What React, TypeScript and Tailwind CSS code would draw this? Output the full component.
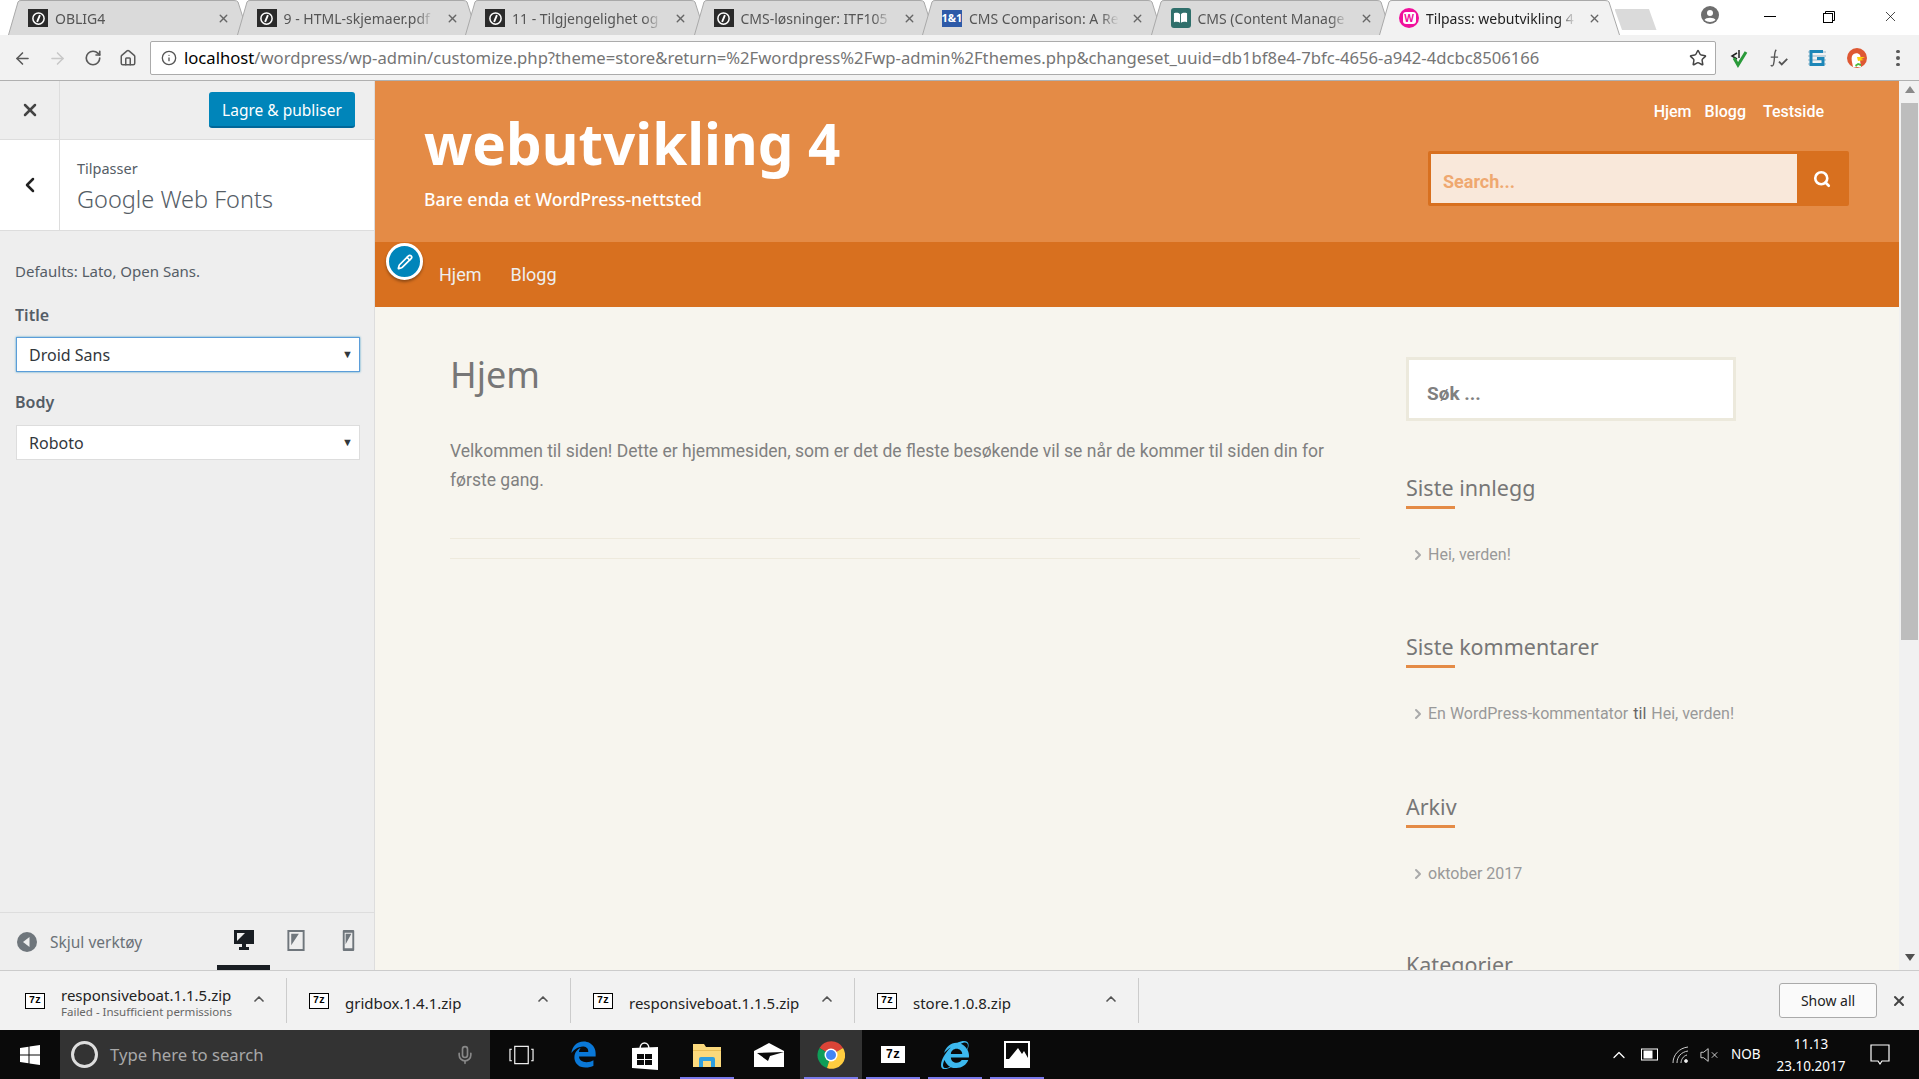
import { ArrowLeft, ArrowRight, ChevronLeft, ChevronRight, ChevronUp, Home, Info, Mic, Pencil, RotateCw, Search, Star, X } from "lucide-react";
import { FaEdgeLegacy, FaInternetExplorer } from "react-icons/fa";

const tabs = [
  { title: "OBLIG4", icon: "wp" },
  { title: "9 - HTML-skjemaer.pdf", icon: "wp" },
  { title: "11 - Tilgjengelighet og", icon: "wp" },
  { title: "CMS-løsninger: ITF105", icon: "wp" },
  { title: "CMS Comparison: A Re", icon: "one" },
  { title: "CMS (Content Manage", icon: "book" },
  { title: "Tilpass: webutvikling 4", icon: "wamp", active: true },
];

const downloads = [
  { name: "responsiveboat.1.1.5.zip", sub: "Failed - Insufficient permissions" },
  { name: "gridbox.1.4.1.zip" },
  { name: "responsiveboat.1.1.5.zip" },
  { name: "store.1.0.8.zip" },
];

function Favicon({ type }: { type: string }) {
  if (type === "one")
    return <div className="flex h-[17px] w-[20px] items-center justify-center bg-[#2d5aa8] text-[11px] font-bold text-white">1&amp;1</div>;
  if (type === "book")
    return (
      <div className="flex h-[20px] w-[20px] items-center justify-center rounded-[3px] bg-[#2f6f6b]">
        <svg viewBox="0 0 16 12" className="h-[12px] w-[15px]" fill="white">
          <path d="M1 1c3-1 5-.5 6.5 1v9C6 10 4 9.5 1 10.500zM15 1c-3-1-5-.5-6.500 1v9c1.500-1 3.500-1.500 6.500-.5z" />
        </svg>
      </div>
    );
  if (type === "wamp")
    return (
      <div className="flex h-[20px] w-[20px] items-center justify-center rounded-full bg-[#f0109c]">
        <div className="flex h-[12px] w-[13px] items-center justify-center rounded-[3px] bg-white text-[10px] font-bold leading-none text-[#f0109c]">W</div>
      </div>
    );
  return (
    <div className="flex h-[18px] w-[20px] items-center justify-center bg-[#2b2b2b]">
      <svg viewBox="0 0 16 16" className="h-[15px] w-[15px]" fill="none" stroke="white">
        <circle cx="8" cy="8" r="6" strokeWidth="1.600" />
        <path d="M9.500 4.500 6.500 11.500" strokeWidth="2" />
      </svg>
    </div>
  );
}

function Tab({ title, icon, active }: { title: string; icon: string; active?: boolean }) {
  return (
    <div className={`relative -mr-[12.500px] h-[35px] w-[241px] shrink-0 ${active ? "z-10" : ""}`}>
      <svg viewBox="0 0 241 35" className="absolute inset-0 h-full w-full">
        <path
          d="M0.500 35 L10 2 Q10.500 .5 13 .5 L226 .5 Q229 .5 230 2 L240.500 35"
          fill={active ? "#f2f2f2" : "#dadada"}
          stroke="#a9a9a9"
        />
      </svg>
      <div className="relative flex h-full items-center pl-[20px] pt-[1px]">
        <Favicon type={icon} />
        <span
          className={`ml-[7px] w-[150px] overflow-hidden whitespace-nowrap text-[14px] [mask-image:linear-gradient(to_right,black_88%,transparent)] ${active ? "text-[#222]" : "text-[#555]"}`}
        >
          {title}
        </span>
        <X className="ml-[12px] text-[#666]" size={13} strokeWidth={2.500} />
      </div>
    </div>
  );
}

function TabStrip() {
  return (
    <div className="flex h-[35px] shrink-0 items-start bg-white pl-[8px]">
      {tabs.map((t) => (
        <Tab key={t.title} title={t.title} icon={t.icon} active={t.active} />
      ))}
      <div className="ml-[7px] mt-[9px] h-[21px] w-[42px] bg-[#dadada] [clip-path:polygon(0_0,82%_0,100%_100%,18%_100%)]" />
      <svg viewBox="0 0 18 18" className="ml-[44px] mt-[6px] h-[18px] w-[18px]">
        <circle cx="9" cy="9" r="9" fill="#6e6e6e" />
        <circle cx="9" cy="7" r="3" fill="white" />
        <path d="M3.500 14c1-3 10-3 11 0-3 2.500-8 2.500-11 0z" fill="white" />
      </svg>
      <div className="ml-[45px] mt-[16px] h-[1px] w-[12px] bg-black" />
      <svg viewBox="0 0 12 12" className="ml-[47px] mt-[11px] h-[12px] w-[12px]" fill="none" stroke="black">
        <rect x="0.500" y="2.500" width="9" height="9" />
        <path d="M2.500 2.500V.5H11.500V9.500H9.500" />
      </svg>
      <X className="ml-[47px] mt-[8px] text-black" size={17} strokeWidth={1} />
    </div>
  );
}

function Toolbar() {
  return (
    <div className="flex h-[46px] shrink-0 items-center border-b border-[#b0b0b0] bg-[#f2f2f2] pl-[13px] pt-[1px]">
      <ArrowLeft className="text-[#5a5a5a]" size={19} strokeWidth={2} />
      <ArrowRight className="ml-[16px] text-[#c8c8c8]" size={19} strokeWidth={2} />
      <RotateCw className="ml-[17px] text-[#5a5a5a]" size={18} strokeWidth={2.200} />
      <Home className="ml-[17px] text-[#5a5a5a]" size={18} strokeWidth={2} />
      <div className="ml-[13px] flex h-[34px] w-[1566px] items-center rounded-[2px] border border-[#ababab] bg-white pl-[10px]">
        <Info className="text-[#555]" size={16} strokeWidth={2} />
        <span className="ml-[7px] whitespace-nowrap text-[16.650px] text-[#757575]">
          <span className="text-black">localhost</span>/wordpress/wp-admin/customize.php?theme=store&amp;return=%2Fwordpress%2Fwp-admin%2Fthemes.php&amp;changeset_uuid=db1bf8e4-7bfc-4656-a942-4dcbc8506166
        </span>
        <Star className="ml-auto mr-[8px] text-[#444]" size={18} strokeWidth={2} />
      </div>
      <svg viewBox="0 0 20 20" className="ml-[13px] h-[20px] w-[20px]" fill="none">
        <path d="M8 5 3 8l5 3M10 2v8" stroke="#222" strokeWidth="1.500" />
        <path d="m5 10 4 7 8-13" stroke="#2a9a3a" strokeWidth="3" />
      </svg>
      <svg viewBox="0 0 24 20" className="ml-[19px] h-[20px] w-[22px]" fill="none" stroke="#555" strokeWidth="1.500">
        <path d="M9 1C6 4 8 10 6 17c-.5 2-2 2-3 1M3 9h8" />
        <path d="m12 14 3 3 6-6" strokeWidth="2" />
      </svg>
      <svg viewBox="0 0 20 20" className="ml-[17px] h-[20px] w-[20px]" fill="none">
        <path d="M1 4h18M1 8h18M1 12h18M1 16h18" stroke="#c5d3dc" strokeWidth="2" />
        <path d="M16 3.500H4v13h12v-6h-6" stroke="#1e87b8" strokeWidth="3" />
      </svg>
      <svg viewBox="0 0 20 20" className="ml-[20px] h-[20px] w-[20px]">
        <circle cx="10" cy="10" r="10" fill="#de5833" />
        <path d="M6 19c-1-5-2-8-1-11 1-3 6-4 8-1 1 2 0 3 0 5l1 7z" fill="white" />
        <path d="M10 9h8l-4 2 3 1-6 1z" fill="#fdd20a" />
        <path d="m8 17 3-2 3 1v2l-3-1-2 2z" fill="#4cba3c" />
      </svg>
      <div className="ml-[29px] flex flex-col gap-[3px]">
        <div className="h-[3.500px] w-[3.500px] rounded-full bg-[#5a5a5a]" />
        <div className="h-[3.500px] w-[3.500px] rounded-full bg-[#5a5a5a]" />
        <div className="h-[3.500px] w-[3.500px] rounded-full bg-[#5a5a5a]" />
      </div>
    </div>
  );
}

function FontSelect({ value, focused }: { value: string; focused?: boolean }) {
  return (
    <div
      className={`ml-[1px] flex h-[35px] w-[344px] items-center border bg-white pl-[12px] pr-[6px] text-[16px] text-[#32373c] ${focused ? "border-[#5b9dd9] shadow-[0_0_2px_rgba(30,140,190,0.8)]" : "border-[#ddd]"}`}
    >
      {value}
      <span className="ml-auto text-[11px] text-[#32373c]">▼</span>
    </div>
  );
}

function Customizer() {
  return (
    <div className="flex h-full w-[375px] shrink-0 flex-col border-r border-[#ddd] bg-[#eee] text-[#555d66]">
      <div className="flex h-[58px] shrink-0 items-center">
        <div className="flex h-full w-[60px] items-center justify-center border-r border-[#ddd]">
          <X className="text-[#444]" size={20} strokeWidth={3} />
        </div>
        <div className="ml-[149px] flex h-[36px] w-[146px] items-center justify-center rounded-[3px] border-b-2 border-[#006799] bg-[#0085ba] pt-[4px] text-[15.500px] text-white">
          Lagre &amp; publiser
        </div>
      </div>
      <div className="flex h-[92px] shrink-0 border-y border-[#ddd] bg-white">
        <div className="flex w-[60px] items-center justify-center border-r border-[#ddd]">
          <ChevronLeft className="text-[#222]" size={24} strokeWidth={2.500} />
        </div>
        <div className="pl-[17px] pt-[16px]">
          <div className="text-[14.500px] leading-[24px]">Tilpasser</div>
          <div className="mt-[2px] text-[23.500px] font-light leading-[34px]">Google Web Fonts</div>
        </div>
      </div>
      <div className="flex flex-1 flex-col pl-[15px] pt-[30px]">
        <div className="text-[15px] leading-[20px]">Defaults: Lato, Open Sans.</div>
        <div className="mt-[23px] mb-[11px] text-[16px] font-semibold leading-[22px]">Title</div>
        <FontSelect value="Droid Sans" focused />
        <div className="mt-[19px] mb-[12px] text-[16px] font-semibold leading-[22px]">Body</div>
        <FontSelect value="Roboto" />
      </div>
      <div className="flex h-[58px] shrink-0 border-t border-[#ddd] pl-[17px]">
        <svg viewBox="0 0 20 20" className="mt-[19px] h-[20px] w-[20px]">
          <circle cx="10" cy="10" r="10" fill="#6f767c" />
          <path d="M12.500 5v10L6 10z" fill="#eee" />
        </svg>
        <span className="ml-[13px] mt-[18px] text-[15.500px] leading-[22px] text-[#6b7278]">Skjul verktøy</span>
        <div className="ml-[75px] flex h-full w-[53px] items-start justify-center border-b-[5px] border-[#191e23] pt-[17px]">
          <svg viewBox="0 0 20 20" className="h-[20px] w-[20px]" fill="#191e23">
            <path d="M0 0h20v14H12v3h3v3H5v-3h3v-3H0zM3 3v8L11 3z" fillRule="evenodd" />
          </svg>
        </div>
        <svg viewBox="0 0 18 22" className="ml-[17px] mt-[17px] h-[21px] w-[18px]" fill="#6f767c">
          <path d="M0 0h18v22H0zM2 2v18h14V2zM4 4h8L4 16z" fillRule="evenodd" />
        </svg>
        <svg viewBox="0 0 12 22" className="ml-[37px] mt-[17px] h-[21px] w-[13px]" fill="#6f767c">
          <path d="M0 1q0-1 1-1h10q1 0 1 1v20q0 1-1 1H1q-1 0-1-1zM2 3v16h8V3zM3 4h6L3 15z" fillRule="evenodd" />
        </svg>
      </div>
    </div>
  );
}

function WidgetTitle({ children }: { children: string }) {
  return (
    <div>
      <h3 className="font-['Noto_Sans',sans-serif] text-[21.500px] leading-[32px] text-[#777]">{children}</h3>
      <div className="mt-[2px] h-[3px] w-[49px] bg-[#e48b46]" />
    </div>
  );
}

function WidgetItem({ children }: { children: React.ReactNode }) {
  return (
    <div className="mt-[34px] flex items-center whitespace-nowrap font-['Roboto',sans-serif] text-[16px] leading-[24px] text-[#999]">
      <ChevronRight className="ml-[4px] mr-[2px] text-[#aaa]" size={16} strokeWidth={3} />
      {children}
    </div>
  );
}

function SitePreview() {
  return (
    <div className="relative flex h-full flex-1 flex-col overflow-hidden bg-[#f7f5ee] font-['Roboto',sans-serif]">
      {/* Site header */}
      <div className="flex h-[161px] shrink-0 bg-[#e48b46] text-white">
        <div className="pl-[49px]">
          <div className="mt-[25px] font-['Noto_Sans',sans-serif] text-[56.500px] font-bold leading-[76px]">webutvikling 4</div>
          <div className="mt-[4px] font-['Noto_Sans',sans-serif] text-[17.600px] font-medium leading-[26px]">Bare enda et WordPress-nettsted</div>
        </div>
        <div className="ml-auto mr-[50px] flex w-[421px] flex-col items-end">
          <div className="mr-[25px] mt-[20px] flex gap-[13px] text-[16px] font-medium leading-[22px]">
            <span>Hjem</span>
            <span>Blogg</span>
            <span className="ml-[4px]">Testside</span>
          </div>
          <div className="mt-[28px] flex h-[55px] w-full rounded-[2px] border-[3px] border-[#d8701f] bg-[#d8701f]">
            <div className="flex flex-1 items-center bg-[#f9e8da] pl-[12px] pt-[5px] text-[18px] font-bold text-[#efa870]">Search...</div>
            <div className="flex w-[49px] items-center justify-center">
              <Search className="text-white" size={18} strokeWidth={3.500} />
            </div>
          </div>
        </div>
      </div>
      {/* Main nav */}
      <div className="flex h-[65px] shrink-0 items-center gap-[29px] bg-[#d8701f] pl-[64px] text-[18px] text-[#eee]">
        <span>Hjem</span>
        <span>Blogg</span>
      </div>
      <div className="absolute left-[11px] top-[162px] flex h-[37px] w-[37px] items-center justify-center rounded-full border-[3px] border-white bg-[#0085ba] shadow-[0_2px_3px_rgba(0,0,0,0.35)]">
        <Pencil className="text-white" size={16} strokeWidth={2.500} />
      </div>
      {/* Content */}
      <div className="flex min-h-0 flex-1 pl-[75px]">
        <div className="w-[910px] shrink-0">
          <h1 className="mt-[42px] font-['Noto_Sans',sans-serif] text-[36px] leading-[52px] text-[#777]">Hjem</h1>
          <p className="mt-[36px] w-[890px] text-[17.500px] leading-[29px] text-[#808080]">
            Velkommen til siden! Dette er hjemmesiden, som er det de fleste besøkende vil se når de kommer til siden din for første gang.
          </p>
          <div className="mt-[43px] h-[1px] bg-[#eeeadd]" />
          <div className="mt-[19px] h-[1px] bg-[#eeeadd]" />
        </div>
        <div className="ml-[46px] w-[330px] shrink-0">
          <div className="mt-[50px] flex h-[64px] items-center border-[3px] border-[#ece9dc] bg-white pl-[18px] pt-[10px] text-[19px] font-bold text-[#808080]">Søk ...</div>
          <div className="mt-[51px]">
            <WidgetTitle>Siste innlegg</WidgetTitle>
            <WidgetItem>Hei, verden!</WidgetItem>
          </div>
          <div className="mt-[64px]">
            <WidgetTitle>Siste kommentarer</WidgetTitle>
            <WidgetItem>
              En WordPress-kommentator <span className="mx-[5px] text-[#666]">til</span> Hei, verden!
            </WidgetItem>
          </div>
          <div className="mt-[65px]">
            <WidgetTitle>Arkiv</WidgetTitle>
            <WidgetItem>oktober 2017</WidgetItem>
          </div>
          <div className="mt-[63px]">
            <WidgetTitle>Kategorier</WidgetTitle>
          </div>
        </div>
      </div>
    </div>
  );
}

function Scrollbar() {
  return (
    <div className="flex h-full w-[20px] shrink-0 flex-col items-center bg-[#f1f1f1] pt-[5px] pl-[1px]">
      <div className="h-0 w-0 border-x-[5px] border-b-[7px] border-x-transparent border-b-[#8a8a8a]" />
      <div className="mt-[10px] h-[537px] w-[17px] bg-[#bdbdbd]" />
      <div className="mt-auto mb-[9px] h-0 w-0 border-x-[5px] border-t-[7px] border-x-transparent border-t-[#505050]" />
    </div>
  );
}

function SevenZip({ small }: { small?: boolean }) {
  return (
    <div className={`flex items-center justify-center bg-white font-['Liberation_Mono',monospace] font-bold leading-none text-black ${small ? "h-[16px] w-[20px] border border-black text-[10px]" : "h-[17px] w-[24px] text-[12px]"}`}>
      7z
    </div>
  );
}

function DownloadBar() {
  return (
    <div className="flex h-[60px] shrink-0 items-center border-t border-[#ccc] bg-[#f2f2f2] text-[#222]">
      {downloads.map((d, i) => (
        <div key={i} className={`flex h-[45px] shrink-0 items-center border-r border-[#ccc] ${i === 0 ? "w-[287px] pl-[25px]" : "w-[284px] pl-[22px]"}`}>
          <div className="shrink-0"><SevenZip small /></div>
          <div className="ml-[16px] w-[190px] whitespace-nowrap">
            <div className={`text-[15px] leading-[19px] ${d.sub ? "mt-[3px]" : "mt-[6px]"}`}>{d.name}</div>
            {d.sub && <div className="text-[11.500px] leading-[14px] text-[#666]">{d.sub}</div>}
          </div>
          <ChevronUp className="-mt-[3px] text-[#555]" size={16} strokeWidth={2.500} />
        </div>
      ))}
      <div className="mb-[1px] ml-[640px] flex h-[35px] w-[98px] items-center justify-center rounded-[3px] border border-[#aaa] bg-[#fafafa] text-[14px] text-[#222]">Show all</div>
      <X className="ml-[14px] text-[#444]" size={16} strokeWidth={3} />
    </div>
  );
}

function TaskCell({ children, open, current }: { children: React.ReactNode; open?: boolean; current?: boolean }) {
  return (
    <div className={`relative flex h-full w-[62px] items-center justify-center ${current ? "bg-[#333]" : ""}`}>
      {children}
      {open && <div className="absolute bottom-0 left-[4px] right-[4px] h-[2px] bg-[#7a7aeb]" />}
    </div>
  );
}

function Taskbar() {
  return (
    <div className="flex h-[49px] shrink-0 items-center bg-[#0a0a0a] text-white">
      <div className="flex h-full w-[60px] items-center justify-center">
        <svg viewBox="0 0 20 20" className="h-[20px] w-[20px]" fill="white">
          <path d="M0 3 8.500 1.800V9.500H0zM9.500 1.600 20 0V9.500H9.500zM0 10.500H8.500V18.200L0 17zM9.500 10.500H20V20L9.500 18.400z" />
        </svg>
      </div>
      <div className="flex h-full w-[430px] items-center bg-[#333] pl-[11px]">
        <div className="h-[27px] w-[27px] rounded-full border-[3.500px] border-[#ddd]" />
        <span className="ml-[12px] text-[16.700px] text-[#a8a8a8]">Type here to search</span>
        <Mic className="ml-auto mr-[15px] text-[#888]" size={20} />
      </div>
      <TaskCell>
        <svg viewBox="0 0 26 20" className="h-[20px] w-[25px]" fill="none" stroke="white" strokeWidth="1.200">
          <rect x="6" y="1" width="14" height="18" />
          <path d="M3 4H1V16H3M23 4H25V16H23" />
        </svg>
      </TaskCell>
      <TaskCell><FaEdgeLegacy className="text-[#0a78d7]" size={27} /></TaskCell>
      <TaskCell>
        <svg viewBox="0 0 26 30" className="h-[30px] w-[26px]">
          <path d="M8 9C8 1 17 1 17 9" fill="none" stroke="white" strokeWidth="1.500" />
          <path d="M0 8 26 7v23L0 28z" fill="white" />
          <path d="M5 14h7v5H5zM13 14h7v5h-7zM5 20h7v5H5zM13 20h7v5h-7z" fill="#0a0a0a" />
        </svg>
      </TaskCell>
      <TaskCell open>
        <svg viewBox="0 0 28 24" className="h-[24px] w-[28px]">
          <path d="M0 1h11l2 3h15v20H0z" fill="#fbd97c" />
          <path d="M0 7h28v1H0z" fill="#e8bd55" />
          <path d="M6 24V16q0-2 2-2h12q2 0 2 2v8h-4v-6h-8v6z" fill="#2f9fe0" />
        </svg>
      </TaskCell>
      <TaskCell>
        <svg viewBox="0 0 30 24" className="h-[24px] w-[30px]">
          <path d="M0 8 15 0l15 8v16H0z" fill="white" />
          <path d="M3 10 30 9 16 13 14 18z" fill="#0a0a0a" />
        </svg>
      </TaskCell>
      <TaskCell open current>
        <svg viewBox="0 0 28 28" className="h-[28px] w-[28px]">
          <path d="M14 14 2.500 7A13.500 13.500 0 0 1 26 7z" fill="#db4437" />
          <path d="M14 14 2.500 7A13.500 13.500 0 0 0 10 27z" fill="#0f9d58" />
          <path d="M14 14 26 7A13.500 13.500 0 0 1 10 27z" fill="#ffcd40" />
          <circle cx="14" cy="14" r="6.500" fill="white" />
          <circle cx="14" cy="14" r="5" fill="#4285f4" />
        </svg>
      </TaskCell>
      <TaskCell open><SevenZip /></TaskCell>
      <TaskCell open>
        <div className="relative">
          <FaInternetExplorer className="text-[#3cb8ee]" size={28} />
        </div>
      </TaskCell>
      <TaskCell open>
        <svg viewBox="0 0 26 27" className="h-[27px] w-[26px]">
          <path d="M0 0h26v27H0z" fill="white" />
          <path d="M2 2h22v15l-4-7-2 3-4-6-9 11H2z" fill="#0a0a0a" />
        </svg>
      </TaskCell>
      <div className="ml-[561px] flex items-center">
        <ChevronUp className="text-white" size={20} strokeWidth={1.500} />
        <svg viewBox="0 0 18 12" className="ml-[12px] h-[13px] w-[18px]" fill="none" stroke="white">
          <rect x="0.500" y="0.500" width="16" height="11" />
          <rect x="3" y="2.500" width="8" height="7" fill="white" />
        </svg>
        <svg viewBox="0 0 18 18" className="ml-[13px] h-[18px] w-[18px]" fill="none" stroke="#ccc">
          <path d="M1 17C1 9 7 2 16 1M5 17C5 11 9 6 16 5M9 17C9 14 11 10 15 9" />
          <circle cx="14" cy="15" r="1.500" fill="white" />
        </svg>
        <svg viewBox="0 0 22 16" className="ml-[10px] h-[16px] w-[20px]" fill="none" stroke="#ddd">
          <path d="M1 5H4L9 1V15L4 11H1zM13 5 19 11M19 5 13 11" />
        </svg>
        <span className="ml-[11px] w-[38px] text-[13.500px]">NOB</span>
        <div className="ml-[7px] flex w-[70px] flex-col items-center text-[13.500px] leading-[22px]">
          <span>11.13</span>
          <span>23.10.2017</span>
        </div>
        <svg viewBox="0 0 20 22" className="ml-[24px] h-[22px] w-[20px]" fill="none" stroke="white" strokeWidth="1.200">
          <path d="M1 1H19V17H12L10 20 8 17H1z" />
        </svg>
      </div>
    </div>
  );
}

export default function App() {
  return (
    <div className="flex h-[1079px] w-[1919px] flex-col overflow-hidden font-['Noto_Sans',sans-serif]">
      <TabStrip />
      <Toolbar />
      <div className="flex min-h-0 flex-1">
        <Customizer />
        <SitePreview />
        <Scrollbar />
      </div>
      <DownloadBar />
      <Taskbar />
    </div>
  );
}
